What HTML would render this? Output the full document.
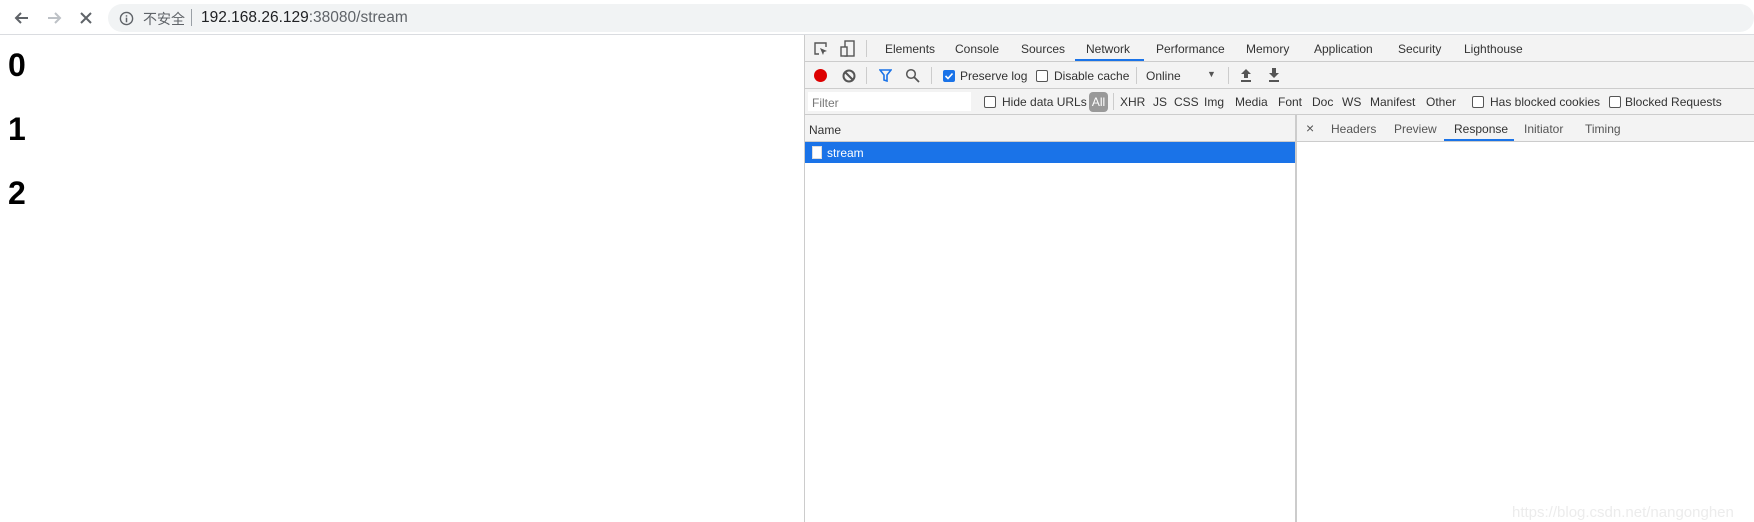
<!DOCTYPE html>
<html><head><meta charset="utf-8"><style>
*{margin:0;padding:0;box-sizing:border-box}
body{width:1754px;height:522px;overflow:hidden;background:#fff;font-family:"Liberation Sans","Noto Sans CJK SC",sans-serif;position:relative}
.a{position:absolute;white-space:nowrap}
.t{font-size:12px;color:#333}
.cb{position:absolute;width:12px;height:12px;border:1px solid #555;border-radius:2px;background:#fff}
.sep{position:absolute;width:1px;background:#ccc}
</style></head><body>
<div class="a" style="left:0;top:0;width:1754px;height:35px;background:#fff;border-bottom:1px solid #dadce0"></div>
<svg class="a" style="left:12px;top:8px" width="20" height="20" viewBox="0 0 20 20"><path d="M16 10H4M9 5l-5 5 5 5" stroke="#5f6368" stroke-width="2" fill="none"/></svg>
<svg class="a" style="left:44px;top:8px" width="20" height="20" viewBox="0 0 20 20"><path d="M4 10h12M11 5l5 5-5 5" stroke="#bdc1c6" stroke-width="2" fill="none"/></svg>
<svg class="a" style="left:76px;top:8px" width="20" height="20" viewBox="0 0 20 20"><path d="M5 5l10 10M15 5L5 15" stroke="#5f6368" stroke-width="2" fill="none"/></svg>
<div class="a" style="left:108px;top:4px;width:1646px;height:28px;background:#f1f3f4;border-radius:14px"></div>
<svg class="a" style="left:119px;top:11px" width="15" height="15" viewBox="0 0 16 16"><circle cx="8" cy="8" r="6.5" stroke="#5f6368" stroke-width="1.5" fill="none"/><path d="M8 7v5M8 4.5v1.5" stroke="#5f6368" stroke-width="1.6"/></svg>
<div class="a" style="left:143px;top:9px;font-size:14px;color:#5f6368">不安全</div>
<div class="a" style="left:191px;top:9px;width:1px;height:17px;background:#9aa0a6"></div>
<div class="a" style="left:201px;top:9px;font-size:15.5px;color:#202124">192.168.26.129<span style="color:#5f6368">:38080/stream</span></div>
<div class="a" style="left:8px;top:47px;font-size:32px;font-weight:bold;color:#000">0</div>
<div class="a" style="left:8px;top:111px;font-size:32px;font-weight:bold;color:#000">1</div>
<div class="a" style="left:8px;top:175px;font-size:32px;font-weight:bold;color:#000">2</div>
<div class="a" style="left:804px;top:35px;width:950px;height:487px;background:#fff;border-left:1px solid #ccc"></div>
<div class="a" style="left:805px;top:35px;width:949px;height:107px;background:#f3f3f3"></div>
<div class="a" style="left:805px;top:61px;width:949px;height:1px;background:#ccc"></div>
<div class="a" style="left:805px;top:88px;width:949px;height:1px;background:#ccc"></div>
<div class="a" style="left:805px;top:114px;width:949px;height:1px;background:#ccc"></div>
<div class="a" style="left:805px;top:141px;width:949px;height:1px;background:#ccc"></div>
<svg class="a" style="left:813px;top:41px" width="16" height="16" viewBox="0 0 16 16"><path d="M6 13H2V2h11v4" stroke="#555" stroke-width="1.4" fill="none"/><path d="M7 7l7 3-3 1-1 3z" fill="#555"/></svg>
<svg class="a" style="left:840px;top:40px" width="16" height="17" viewBox="0 0 16 17"><rect x="5" y="1" width="9" height="15" stroke="#555" stroke-width="1.4" fill="none"/><rect x="1" y="7" width="6" height="9" stroke="#555" stroke-width="1.4" fill="#f3f3f3"/></svg>
<div class="sep" style="left:866px;top:40px;height:17px"></div>
<div class="a t" style="left:885px;top:42px">Elements</div>
<div class="a t" style="left:955px;top:42px">Console</div>
<div class="a t" style="left:1021px;top:42px">Sources</div>
<div class="a t" style="left:1086px;top:42px">Network</div>
<div class="a" style="left:1075px;top:59px;width:69px;height:2px;background:#1a73e8"></div>
<div class="a t" style="left:1156px;top:42px">Performance</div>
<div class="a t" style="left:1246px;top:42px">Memory</div>
<div class="a t" style="left:1314px;top:42px">Application</div>
<div class="a t" style="left:1398px;top:42px">Security</div>
<div class="a t" style="left:1464px;top:42px">Lighthouse</div>
<div class="a" style="left:814px;top:69px;width:13px;height:13px;border-radius:50%;background:#d00"></div>
<svg class="a" style="left:842px;top:69px" width="14" height="14" viewBox="0 0 14 14"><circle cx="7" cy="7" r="5.5" stroke="#555" stroke-width="2" fill="none"/><path d="M3 3l8 8" stroke="#555" stroke-width="2"/></svg>
<div class="sep" style="left:866px;top:67px;height:17px"></div>
<svg class="a" style="left:879px;top:69px" width="13" height="13" viewBox="0 0 13 13"><path d="M1 1h11L8 6v6L5 11V6z" stroke="#1a73e8" stroke-width="1.6" fill="none"/></svg>
<svg class="a" style="left:905px;top:68px" width="15" height="15" viewBox="0 0 15 15"><circle cx="6" cy="6" r="4.3" stroke="#555" stroke-width="1.5" fill="none"/><path d="M9 9l5 5" stroke="#555" stroke-width="1.8"/></svg>
<div class="sep" style="left:931px;top:67px;height:17px"></div>
<div class="cb" style="left:943px;top:70px;background:#1a73e8;border-color:#1a73e8"></div>
<svg class="a" style="left:944px;top:71px" width="10" height="10" viewBox="0 0 10 10"><path d="M1.5 5l2.5 2.5 4.5-5" stroke="#fff" stroke-width="1.6" fill="none"/></svg>
<div class="a t" style="left:960px;top:69px">Preserve log</div>
<div class="cb" style="left:1036px;top:70px"></div>
<div class="a t" style="left:1054px;top:69px">Disable cache</div>
<div class="sep" style="left:1136px;top:67px;height:17px"></div>
<div class="a t" style="left:1146px;top:69px">Online</div>
<div class="a" style="left:1207px;top:69px;font-size:9px;color:#555">▼</div>
<div class="sep" style="left:1228px;top:67px;height:17px"></div>
<svg class="a" style="left:1240px;top:68px" width="12" height="14" viewBox="0 0 12 14"><path d="M6 1L1 6h3v4h4V6h3z" fill="#555"/><rect x="1" y="12" width="10" height="2" fill="#555"/></svg>
<svg class="a" style="left:1268px;top:68px" width="12" height="14" viewBox="0 0 12 14"><path d="M4 0h4v5h3l-5 5-5-5h3z" fill="#555"/><rect x="1" y="12" width="10" height="2" fill="#555"/></svg>
<div class="a" style="left:808px;top:92px;width:163px;height:19px;background:#fff"></div>
<div class="a" style="left:812px;top:96px;font-size:12px;color:#777">Filter</div>
<div class="cb" style="left:984px;top:96px"></div>
<div class="a t" style="left:1002px;top:95px">Hide data URLs</div>
<div class="a" style="left:1089px;top:92px;width:19px;height:20px;background:#999;border-radius:4px;color:#fff;font-size:12px;text-align:center;line-height:20px">All</div>
<div class="sep" style="left:1113px;top:93px;height:17px"></div>
<div class="a t" style="left:1120px;top:95px">XHR</div>
<div class="a t" style="left:1153px;top:95px">JS</div>
<div class="a t" style="left:1174px;top:95px">CSS</div>
<div class="a t" style="left:1204px;top:95px">Img</div>
<div class="a t" style="left:1235px;top:95px">Media</div>
<div class="a t" style="left:1278px;top:95px">Font</div>
<div class="a t" style="left:1312px;top:95px">Doc</div>
<div class="a t" style="left:1342px;top:95px">WS</div>
<div class="a t" style="left:1370px;top:95px">Manifest</div>
<div class="a t" style="left:1426px;top:95px">Other</div>
<div class="cb" style="left:1472px;top:96px"></div>
<div class="a t" style="left:1490px;top:95px">Has blocked cookies</div>
<div class="cb" style="left:1609px;top:96px"></div>
<div class="a t" style="left:1625px;top:95px">Blocked Requests</div>
<div class="a t" style="left:809px;top:123px">Name</div>
<div class="a" style="left:805px;top:142px;width:490px;height:21px;background:#1a73e8"></div>
<div class="a" style="left:812px;top:146px;width:10px;height:13px;background:#fff;border:1px solid #ddd"></div>
<div class="a" style="left:827px;top:146px;font-size:12px;color:#fff">stream</div>
<div class="a" style="left:1295px;top:115px;width:2px;height:407px;background:#ccc"></div>
<div class="a" style="left:1306px;top:120px;font-size:14px;color:#555">×</div>
<div class="a t" style="left:1331px;top:122px;color:#555">Headers</div>
<div class="a t" style="left:1394px;top:122px;color:#555">Preview</div>
<div class="a t" style="left:1454px;top:122px">Response</div>
<div class="a" style="left:1444px;top:139px;width:70px;height:2px;background:#1a73e8"></div>
<div class="a t" style="left:1524px;top:122px;color:#555">Initiator</div>
<div class="a t" style="left:1585px;top:122px;color:#555">Timing</div>
<div class="a" style="left:1512px;top:504px;font-size:15px;color:#ececec">https://blog.csdn.net/nangonghen</div>
</body></html>
